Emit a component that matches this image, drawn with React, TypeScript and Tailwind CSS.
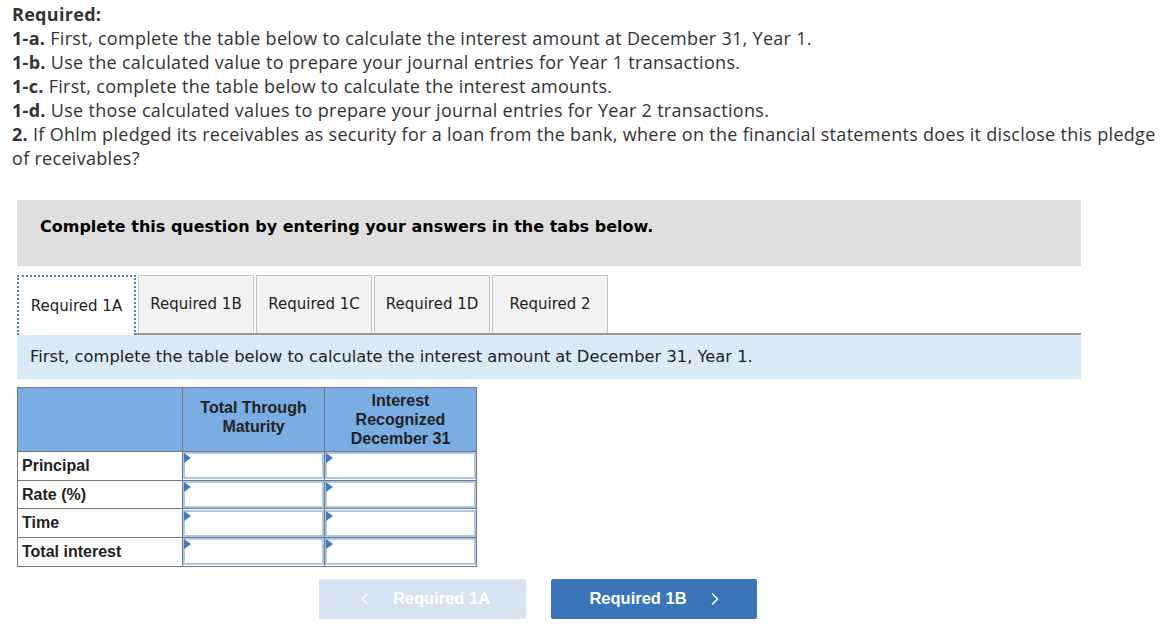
import { ChevronLeft, ChevronRight } from "lucide-react";

const tabs = ["Required 1A", "Required 1B", "Required 1C", "Required 1D", "Required 2"];
const rows = ["Principal", "Rate (%)", "Time", "Total interest"];

function InputCell() {
  return (
    <td className="border border-[#777] p-0 h-[28.7px]">
      <div className="relative h-[27px] border-2 border-[#a9c7e8] bg-white">
        <span className="absolute left-[-1px] top-[-1px] w-0 h-0 border-y-[5px] border-y-transparent border-l-[7px] border-l-[#3f7ac0]" />
      </div>
    </td>
  );
}

export default function App() {
  return (
    <div className="bg-white w-[1171px] h-[629px] overflow-hidden">
      <div className="mt-[2px] pl-[12px] pr-[2px] text-[18px] tracking-[0.3px] leading-[24px] text-[#333] font-['Open_Sans',sans-serif]">
        <p className="font-bold">Required:</p>
        <p><b>1-a.</b> First, complete the table below to calculate the interest amount at December 31, Year 1.</p>
        <p><b>1-b.</b> Use the calculated value to prepare your journal entries for Year 1 transactions.</p>
        <p><b>1-c.</b> First, complete the table below to calculate the interest amounts.</p>
        <p><b>1-d.</b> Use those calculated values to prepare your journal entries for Year 2 transactions.</p>
        <p><b>2.</b> If Ohlm pledged its receivables as security for a loan from the bank, where on the financial statements does it disclose this pledge of receivables?</p>
      </div>

      <div className="ml-[17px] w-[1064px] mt-[30px] h-[66px] bg-[#dfdfdf] flex items-center pl-[23px] pb-[12px] font-['DejaVu_Sans',sans-serif] font-bold text-[16px] text-black">
        Complete this question by entering your answers in the tabs below.
      </div>

      <div className="ml-[17px] w-[1064px] mt-[9px] flex items-end gap-[2px] border-b-2 border-[#999] font-['DejaVu_Sans',sans-serif] text-[15px] text-[#222]">
        {tabs.map((t, i) =>
          i === 0 ? (
            <div key={t} className="h-[60px] w-[119px] mb-[-2px] bg-white border-2 border-dotted border-[#4a7fc1] border-b-0 flex items-center justify-center">
              {t}
            </div>
          ) : (
            <div key={t} className="h-[58px] w-[116px] bg-[#f2f2f2] border border-[#c6c6c6] border-b-0 flex items-center justify-center">
              {t}
            </div>
          )
        )}
      </div>
      <div className="ml-[17px] w-[1064px] h-[44px] bg-[#daebf8] flex items-center pl-[13px] font-['DejaVu_Sans',sans-serif] text-[16.3px] text-[#222]">
        First, complete the table below to calculate the interest amount at December 31, Year 1.
      </div>

      <table className="ml-[17px] mt-[8px] border-collapse font-['Liberation_Sans',Arial,sans-serif] font-bold text-[16px] text-[#222]">
        <thead>
          <tr className="bg-[#7aade4] h-[64px]">
            <th className="border border-[#777] w-[165px]" />
            <th className="border border-[#777] w-[142px] leading-[19px] font-bold pb-[6px]">Total Through<br />Maturity</th>
            <th className="border border-[#777] w-[152px] leading-[19px] font-bold">Interest<br />Recognized<br />December 31</th>
          </tr>
        </thead>
        <tbody>
          {rows.map((r) => (
            <tr key={r}>
              <td className="border border-[#777] h-[28.7px] pl-[4px] text-left">{r}</td>
              <InputCell />
              <InputCell />
            </tr>
          ))}
        </tbody>
      </table>

      <div className="mt-[12px] ml-[319px] flex gap-[25px] font-['Liberation_Sans',Arial,sans-serif] font-bold text-[16.5px] text-white">
        <div className="w-[207px] h-[40px] rounded-[2px] bg-[#d6e3f1] flex items-center justify-center gap-[18px]">
          <ChevronLeft size={20} strokeWidth={2} />
          <span>Required 1A</span>
        </div>
        <div className="w-[206px] h-[40px] rounded-[2px] bg-[#3a75b9] flex items-center justify-center gap-[18px] pl-[6px]">
          <span>Required 1B</span>
          <ChevronRight size={20} strokeWidth={2} />
        </div>
      </div>
    </div>
  );
}
